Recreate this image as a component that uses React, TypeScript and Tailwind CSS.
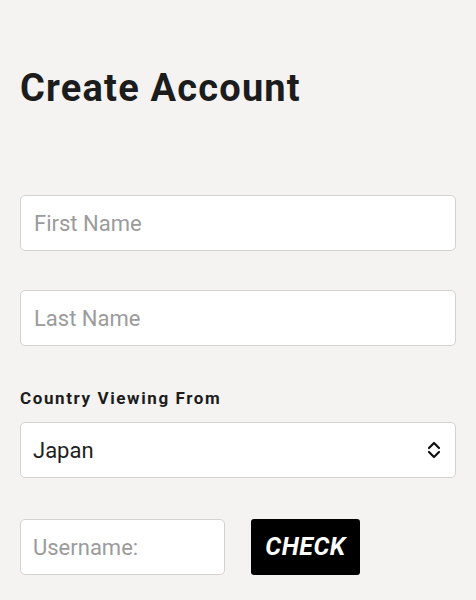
export default function App() {
  return (
    <div
      className="min-h-[600px] w-full bg-[#f4f3f1] px-5 pt-[60px]"
      style={{ fontFamily: "Roboto, 'Liberation Sans', sans-serif" }}
    >
      <h1 className="text-[38px] font-bold leading-[56px] tracking-[1.2px] text-[#1c1c1c]">
        Create Account
      </h1>

      <div className="mt-[79px] flex flex-col">
        <input
          type="text"
          placeholder="First Name"
          className="h-[56px] w-full rounded-[5px] border border-[#d3d2cf] bg-white px-[13px] text-[22px] text-[#222] placeholder:text-[#9b9b9b] outline-none"
        />
        <input
          type="text"
          placeholder="Last Name"
          className="mt-[39px] h-[56px] w-full rounded-[5px] border border-[#d3d2cf] bg-white px-[13px] text-[22px] text-[#222] placeholder:text-[#9b9b9b] outline-none"
        />

        <label className="mt-[40px] text-[17px] font-bold leading-[24px] tracking-[1.6px] text-[#1c1c1c]">
          Country Viewing From
        </label>
        <div className="mt-[12px] flex h-[56px] w-full items-center justify-between rounded-[5px] border border-[#d3d2cf] bg-white pl-[12px] pr-[12px]">
          <span className="text-[22px] text-[#1e1e1e]">Japan</span>
          <svg width="16" height="20" viewBox="0 0 16 20" fill="none" className="mr-[1px]">
            <path d="M3 8 L8 3 L13 8" stroke="#111" strokeWidth="2.2" strokeLinecap="round" strokeLinejoin="round" />
            <path d="M3 12 L8 17 L13 12" stroke="#111" strokeWidth="2.2" strokeLinecap="round" strokeLinejoin="round" />
          </svg>
        </div>

        <div className="mt-[41px] flex items-center gap-[26px]">
          <input
            type="text"
            placeholder="Username:"
            className="h-[56px] w-[205px] rounded-[5px] border border-[#d3d2cf] bg-white px-[12px] text-[22px] text-[#222] placeholder:text-[#9b9b9b] outline-none"
          />
          <button className="h-[56px] w-[109px] rounded-[3px] bg-black text-[25px] font-bold italic tracking-[0.5px] text-white">
            CHECK
          </button>
        </div>
      </div>
    </div>
  );
}
